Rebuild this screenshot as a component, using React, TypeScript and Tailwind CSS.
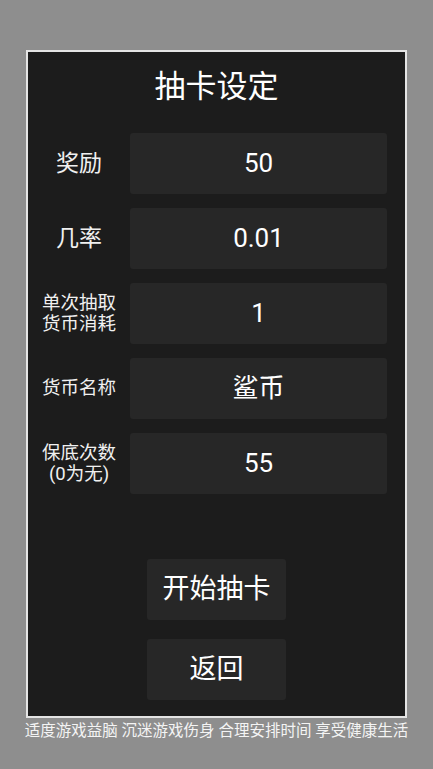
import React from "react";

interface Field {
  label: string[];
  value: string;
  small?: boolean;
}

const fields: Field[] = [
  { label: ["奖励"], value: "50" },
  { label: ["几率"], value: "0.01" },
  { label: ["单次抽取", "货币消耗"], value: "1", small: true },
  { label: ["货币名称"], value: "鲨币", small: true },
  { label: ["保底次数", "(0为无)"], value: "55", small: true },
];

const font = { fontFamily: 'Roboto, "Noto Sans CJK SC", sans-serif' };

export default function App() {
  return (
    <div
      className="flex h-[769px] w-full flex-col items-center bg-[#8e8e8e] pt-[50px]"
      style={font}
    >
      <div className="flex h-[668px] w-[381px] flex-col border-2 border-[#e4e4e4] bg-[#1c1c1c]">
        <h1 className="mt-[15px] text-center text-[31px] leading-[40px] text-white">
          抽卡设定
        </h1>

        <div className="mt-[26px] flex flex-col gap-[14px]">
          {fields.map((f) => (
            <div key={f.value} className="flex h-[61px] items-center">
              <div
                className={
                  f.small
                    ? "w-[102px] text-center text-[18.5px] leading-[21px] text-[#f0f0f0]"
                    : "w-[102px] text-center text-[23px] leading-[28px] text-[#f0f0f0]"
                }
              >
                {f.label.map((l) => (
                  <div key={l}>{l}</div>
                ))}
              </div>
              <div className="flex h-full w-[257px] items-center justify-center rounded-[3px] bg-[#272727] text-[26px] text-white">
                {f.value}
              </div>
            </div>
          ))}
        </div>

        <div className="mt-[65px] flex flex-col items-center gap-[19px]">
          <button className="flex h-[61px] w-[139px] items-center justify-center rounded-[3px] bg-[#272727] text-[27px] text-white">
            开始抽卡
          </button>
          <button className="flex h-[61px] w-[139px] items-center justify-center rounded-[3px] bg-[#272727] text-[27px] text-white">
            返回
          </button>
        </div>
      </div>
      <p className="mt-[3px] whitespace-nowrap text-[15.5px] leading-[20px] text-[#f4f4f4]">
        适度游戏益脑 沉迷游戏伤身 合理安排时间 享受健康生活
      </p>
    </div>
  );
}
